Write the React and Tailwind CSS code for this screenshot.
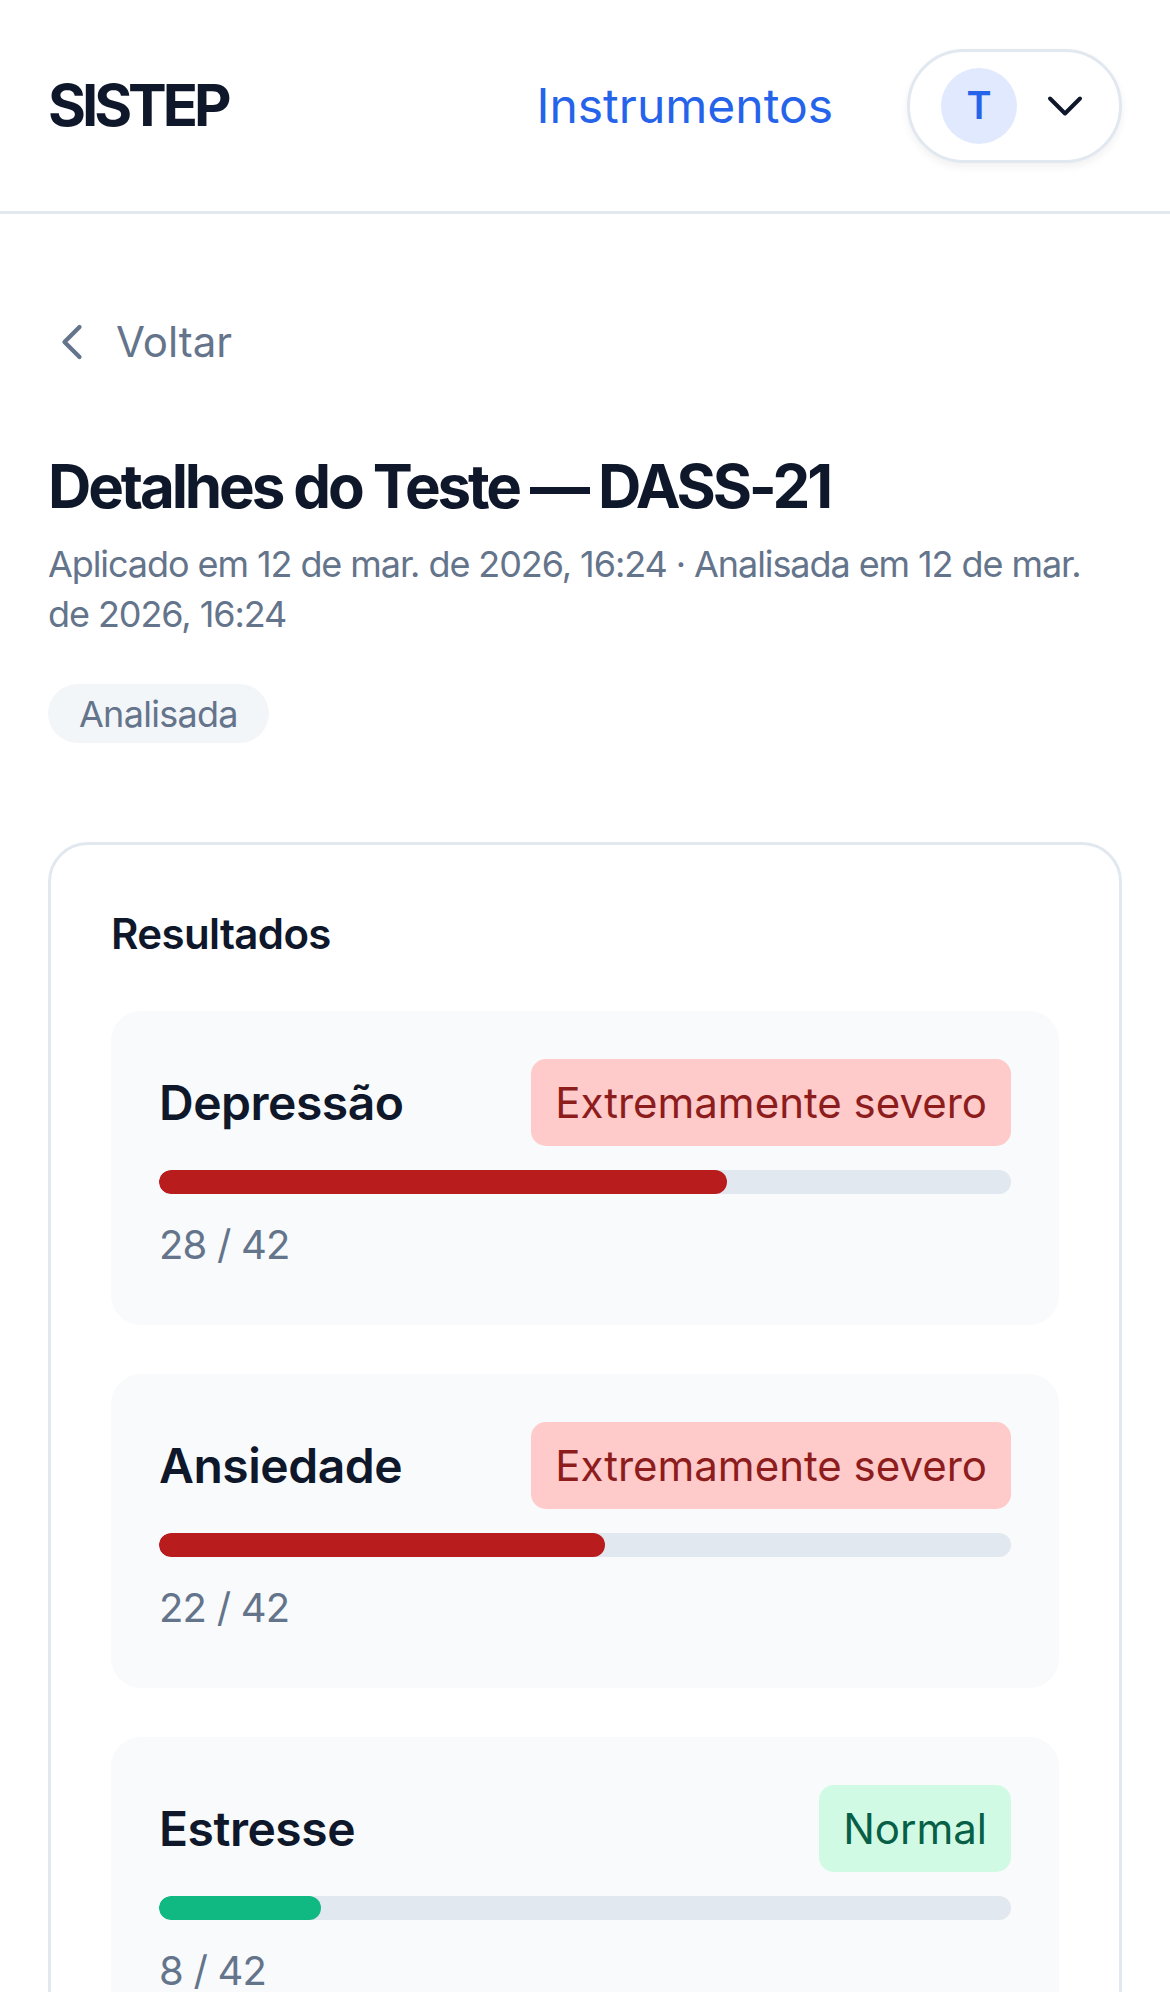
import { ChevronDown, ChevronLeft } from 'lucide-react'

const results = [
  { label: 'Depressão', score: 28, max: 42, level: 'Extremamente severo', tone: 'red' },
  { label: 'Ansiedade', score: 22, max: 42, level: 'Extremamente severo', tone: 'red' },
  { label: 'Estresse', score: 8, max: 42, level: 'Normal', tone: 'green' },
]

const tones = {
  red: { badge: 'bg-[#fecaca] text-[#8d1c1c]', bar: 'bg-[#b91c1c]' },
  green: { badge: 'bg-[#d1fae5] text-[#065f46]', bar: 'bg-[#10b981]' },
}

const ResultItem = ({ item }) => {
  const tone = tones[item.tone]
  const pct = (item.score / item.max) * 100

  return (
    <div className="rounded-[30px] bg-[#f8fafc] px-[48px] pb-[50px] pt-[48px]">
      <div className="flex items-center justify-between">
        <p className="text-[48px] font-semibold leading-[60px] tracking-[-0.01em] text-[#0f172a]">{item.label}</p>
        <span className={`flex h-[87px] items-center rounded-[15px] px-[24px] text-[42px] ${tone.badge}`}>
          {item.level}
        </span>
      </div>
      <div className="mt-[24px] h-[24px] w-full overflow-hidden rounded-full bg-[#e2e8f0]">
        <div className={`h-full rounded-full ${tone.bar}`} style={{ width: `${pct}%` }} />
      </div>
      <p className="mt-[21px] text-[40px] leading-[60px] tracking-[-0.02em] text-[#64748b]">
        {item.score} / {item.max}
      </p>
    </div>
  )
}

export default function App() {
  return (
    <div className="min-h-screen bg-white font-['Inter','Noto_Sans',sans-serif]">
      <header className="flex h-[214px] items-center justify-between border-b-[3px] border-[#e2e8f0] bg-white px-[48px]">
        <span className="text-[58px] font-bold tracking-[-0.07em] text-[#0f172a]">SISTEP</span>
        <div className="flex items-center gap-[74px]">
          <a href="#" className="text-[48px] text-[#2563eb]">
            Instrumentos
          </a>
          <button className="flex h-[114px] items-center gap-[18px] rounded-full border-[3px] border-[#e2e8f0] bg-white pl-[31px] pr-[24px] shadow-[0_4px_8px_rgba(15,23,42,0.06)]">
            <span className="flex h-[76px] w-[76px] items-center justify-center rounded-full bg-[#e0e9fd] text-[38px] font-semibold text-[#2563eb]">
              T
            </span>
            <ChevronDown size={60} strokeWidth={1.6} className="text-[#0f172a]" />
          </button>
        </div>
      </header>

      <main className="px-[48px] pt-[98px]">
        <a href="#" className="flex items-center gap-[14px] text-[42px] leading-[60px] text-[#64748b]">
          <ChevronLeft size={60} strokeWidth={1.7} className="-ml-[6px]" />
          Voltar
        </a>

        <h1 className="mt-[78px] text-[60px] font-bold leading-[72px] tracking-[-0.052em] text-[#0f172a]">
          Detalhes do Teste — DASS-21
        </h1>
        <p className="mt-[17px] text-[36px] leading-[50px] tracking-[-0.03em] text-[#64748b]">
          Aplicado em 12 de mar. de 2026, 16:24 · Analisada em 12 de mar. de 2026, 16:24
        </p>
        <span className="mt-[45px] inline-flex h-[59px] items-center rounded-full bg-[#f3f6f9] px-[31px] text-[36px] tracking-[-0.02em] text-[#64748b]">
          Analisada
        </span>

        <section className="mt-[99px] rounded-[40px] border-[3px] border-[#e2e8f0] bg-white px-[60px] pb-[60px] pt-[59px]">
          <h2 className="mb-[47px] text-[42px] font-semibold leading-[60px] tracking-[-0.015em] text-[#0f172a]">Resultados</h2>
          <div className="flex flex-col gap-[49px]">
            {results.map((item) => (
              <ResultItem key={item.label} item={item} />
            ))}
          </div>
        </section>
      </main>
    </div>
  )
}
